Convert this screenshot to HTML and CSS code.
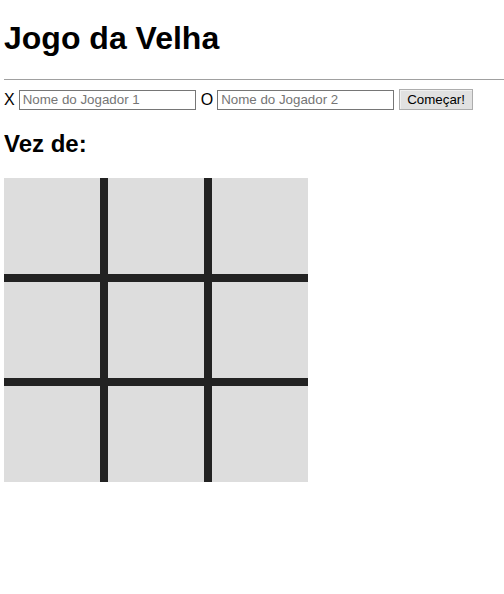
FILE: index.html
```html
<!DOCTYPE html>
<html lang="pt">
<head>
<meta charset="utf-8">
<title>Jogo da Velha</title>
<link rel="stylesheet" href="styles.css">
</head>
<body>
<h1 class="title">Jogo da Velha</h1>
<hr class="divider">
<div class="controls">
  <span class="mark">X</span>
  <input class="player" type="text" placeholder="Nome do Jogador 1">
  <span class="mark mark-o">O</span>
  <input class="player" type="text" placeholder="Nome do Jogador 2">
  <button class="start">Começar!</button>
</div>
<h2 class="turn">Vez de:</h2>
<div class="board">
  <div class="cell"></div><div class="cell"></div><div class="cell"></div>
  <div class="cell"></div><div class="cell"></div><div class="cell"></div>
  <div class="cell"></div><div class="cell"></div><div class="cell"></div>
</div>
</body>
</html>
```
FILE: styles.css
```css
html, body {
  background: #fff;
}
body {
  margin: 0;
  padding: 0 0 0 4px;
  font-family: "Liberation Sans", Arial, sans-serif;
  color: #000;
}
.title {
  margin: 20px 0 0;
  font-size: 32px;
  line-height: 37px;
  font-weight: bold;
}
.divider {
  margin: 22px 0 0;
  border: 0;
  border-top: 1px solid #a0a0a0;
  height: 0;
}
.controls {
  margin-top: 9px;
  height: 21px;
  display: flex;
  align-items: center;
}
.mark {
  font-size: 16px;
  line-height: 18px;
  margin-right: 4px;
}
.mark-o {
  margin-left: 5px;
}
.player {
  box-sizing: border-box;
  width: 177px;
  height: 20px;
  margin: 0;
  padding: 1px 2px 1px 3px;
  border: 1px solid #767676;
  border-radius: 0;
  font-family: "Liberation Sans", Arial, sans-serif;
  font-size: 13.333px;
  color: #000;
  background: #fff;
}
.player::placeholder {
  color: #757575;
}
.start {
  box-sizing: border-box;
  margin: 0 0 0 5px;
  height: 21px;
  width: 74px;
  padding: 0 6px;
  border: 1px solid #adadad;
  border-radius: 0;
  background: #e1e1e1;
  box-shadow: inset 1px 1px 0 #f0f0f0;
  font-family: "Liberation Sans", Arial, sans-serif;
  font-size: 13.333px;
  color: #000;
}
.turn {
  margin: 20px 0 0;
  font-size: 24px;
  line-height: 28px;
  font-weight: bold;
}
.board {
  margin-top: 20px;
  display: grid;
  grid-template-columns: repeat(3, 96px);
  grid-auto-rows: 96px;
  gap: 8px;
  width: 304px;
  background: #222;
}
.cell {
  background: #ddd;
}
```
